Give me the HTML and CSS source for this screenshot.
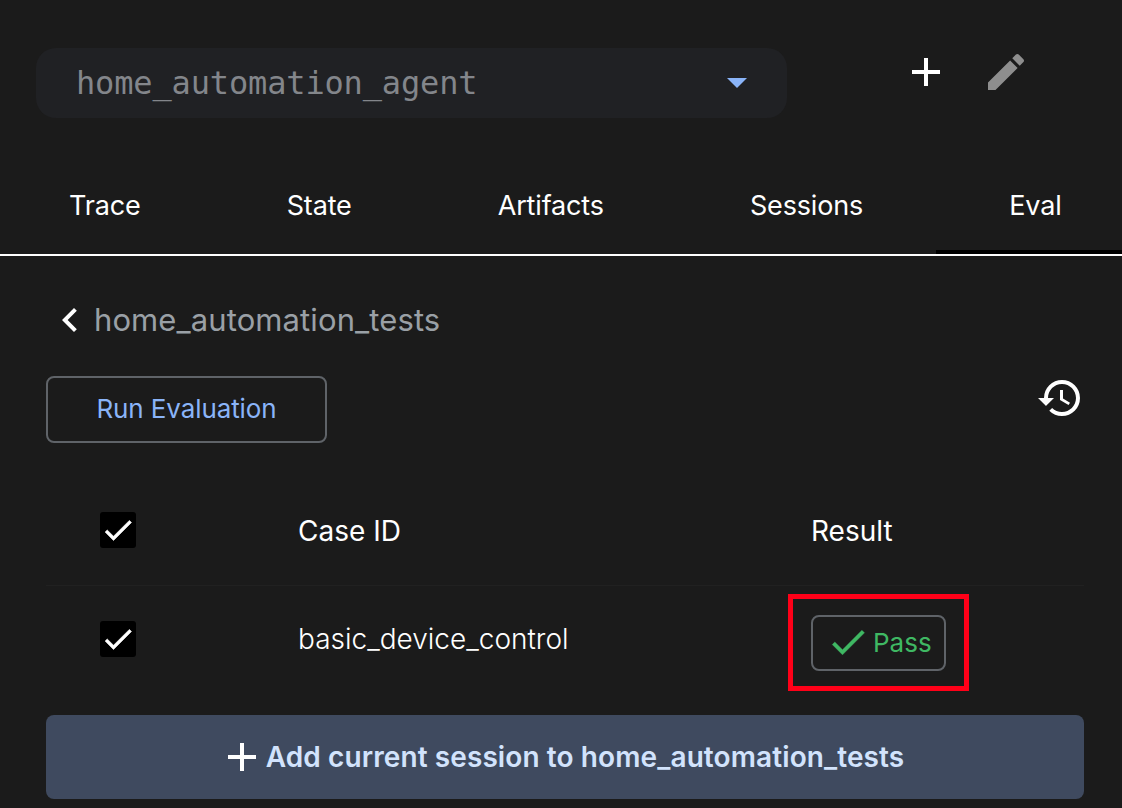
FILE: index.html
```html
<!DOCTYPE html>
<html lang="en">
<head>
<meta charset="UTF-8">
<meta name="viewport" content="width=device-width, initial-scale=1.0">
<title>Eval</title>
<link rel="stylesheet" href="styles.css">
</head>
<body>

<!-- App Selector -->
<div class="top-row">
<div class="app-select">
<span class="app-name">home_automation_agent</span>
<span class="select-arrow"></span>
</div>
<div class="top-actions">
<svg class="icon-48 white" viewBox="0 0 24 24"><path d="M19 13h-6v6h-2v-6H5v-2h6V5h2v6h6v2z"/></svg>
<svg class="icon-48 grey" viewBox="0 0 24 24"><path d="M3 17.25V21h3.75L17.81 9.94l-3.75-3.75L3 17.25zM20.71 7.04c.39-.39.39-1.02 0-1.41l-2.34-2.34c-.39-.39-1.02-.39-1.41 0l-1.83 1.83 3.75 3.75 1.83-1.83z"/></svg>
</div>
</div>

<!-- Tabs -->
<div class="tabs">
<div class="tab">Trace</div>
<div class="tab">State</div>
<div class="tab">Artifacts</div>
<div class="tab">Sessions</div>
<div class="tab active">Eval</div>
</div>

<div class="content">

<div class="back-row">
<svg class="icon-48 white" viewBox="0 0 24 24"><path d="M15.41 7.41L14 6l-6 6 6 6 1.41-1.41L10.83 12z"/></svg>
<span class="set-name">home_automation_tests</span>
</div>

<div class="run-row">
<button class="run-btn">Run Evaluation</button>
<svg class="icon-48 white" viewBox="0 0 24 24"><path d="M13 3a9 9 0 0 0-9 9H1l3.89 3.89.07.14L9 12H6c0-3.87 3.13-7 7-7s7 3.13 7 7-3.13 7-7 7c-1.93 0-3.68-.79-4.94-2.06l-1.42 1.42A8.954 8.954 0 0 0 13 21a9 9 0 0 0 0-18zm-1 5v5l4.28 2.54.72-1.21-3.5-2.08V8H12z"/></svg>
</div>

<!-- Case Table -->
<div class="case-table">
<div class="case-row header-row">
<div class="checkbox"><svg viewBox="0 0 24 24"><path d="M9 16.17L4.83 12l-1.42 1.41L9 19 21 7l-1.41-1.41z"/></svg></div>
<div class="case-id head-text">Case ID</div>
<div class="case-result head-text">Result</div>
</div>
<div class="case-row">
<div class="checkbox"><svg viewBox="0 0 24 24"><path d="M9 16.17L4.83 12l-1.42 1.41L9 19 21 7l-1.41-1.41z"/></svg></div>
<div class="case-id light">basic_device_control</div>
<div>
<div class="pass-badge">
<svg viewBox="0 0 24 24"><path d="M9 16.17L4.83 12l-1.42 1.41L9 19 21 7l-1.41-1.41z"/></svg>
<span>Pass</span>
<div class="highlight"></div>
</div>
</div>
</div>
</div>

<button class="add-btn">
<svg class="icon-48 white" viewBox="0 0 24 24"><path d="M19 13h-6v6h-2v-6H5v-2h6V5h2v6h6v2z"/></svg>
<span>Add current session to home_automation_tests</span>
</button>

</div>

</body>
</html>
```

FILE: styles.css
```css
* {
margin: 0;
padding: 0;
box-sizing: border-box;
font-family: Inter, sans-serif;
}

body {
background-color: #1b1b1b;
color: #fff;
width: 1122px;
height: 808px;
overflow: hidden;
}

.icon-48 {
width: 48px;
height: 48px;
flex-shrink: 0;
display: block;
}

.white {
fill: #fff;
}

.grey {
fill: #8e8e8e;
}

/* App Selector */
.top-row {
display: flex;
align-items: flex-start;
padding: 48px 0 0 36px;
}

.app-select {
width: 751px;
height: 70px;
background: #202124;
border-radius: 20px;
display: flex;
align-items: center;
justify-content: space-between;
padding: 0 40px;
}

.app-name {
font-family: "DejaVu Sans Mono", monospace;
font-size: 32px;
letter-spacing: -0.15px;
color: #83868b;
}

.select-arrow {
width: 0;
height: 0;
border-left: 10px solid transparent;
border-right: 10px solid transparent;
border-top: 10px solid #8ab4f8;
}

.top-actions {
display: flex;
gap: 32px;
margin-left: 115px;
}

/* Tabs */
.tabs {
display: flex;
height: 102px;
margin-top: 36px;
border-bottom: 2px solid #fff;
overflow: hidden;
}

.tab {
flex-shrink: 0;
padding: 2px 73px 0;
height: 100px;
display: flex;
align-items: center;
font-size: 27px;
letter-spacing: -0.15px;
color: #fff;
}

.tab:first-child {
margin-left: -4px;
}

.tab.active {
box-shadow: inset 0 -4px 0 #000;
}

/* Content */
.content {
padding: 40px 38px 0 46px;
}

.back-row {
display: flex;
align-items: center;
}

.set-name {
font-size: 31px;
letter-spacing: 0.1px;
padding-bottom: 2px;
color: #9aa0a6;
}

.run-row {
display: flex;
justify-content: space-between;
align-items: flex-start;
margin-top: 32px;
}

.run-btn {
width: 281px;
height: 67px;
padding-bottom: 2px;
background: transparent;
border: 2px solid #5f6368;
border-radius: 8px;
color: #8ab4f8;
font-size: 26px;
letter-spacing: -0.1px;
}

.run-row .icon-48 {
margin-top: -2px;
}

/* Case Table */
.case-table {
margin-top: 34px;
}

.case-row {
display: grid;
grid-template-columns: 198px 513px 1fr;
align-items: center;
height: 108px;
padding-left: 54px;
}

.header-row {
padding-bottom: 2px;
box-shadow: 0 1px 0 #212121;
}

.head-text {
padding-top: 2px;
}

.checkbox {
width: 36px;
height: 36px;
background: #000;
border-radius: 3px;
}

.checkbox svg {
display: block;
fill: #fff;
stroke: #fff;
stroke-width: .4;
}

.case-id {
font-size: 28px;
}

.light {
font-weight: 300;
}

.case-result {
font-size: 28px;
}

.pass-badge {
position: relative;
display: flex;
align-items: center;
width: 135px;
height: 56px;
margin-top: 8px;
border: 2px solid #5f6368;
border-radius: 8px;
padding: 0 0 2px 13px;
color: #3fb863;
font-size: 26px;
}

.pass-badge svg {
width: 44px;
height: 44px;
margin-right: 3px;
fill: #3fb863;
stroke: #3fb863;
stroke-width: .2;
flex-shrink: 0;
}

/* Red annotation round the result */
.highlight {
position: absolute;
top: -23px;
bottom: -22px;
left: -25px;
right: -25px;
border: 5px solid #ff0018;
}

.add-btn {
width: 1038px;
height: 84px;
margin-top: 22px;
padding-right: 8px;
background: #3f4a5f;
border: none;
border-radius: 8px;
color: #d2e3fc;
font-size: 28px;
font-weight: 600;
letter-spacing: 0.1px;
display: flex;
align-items: center;
justify-content: center;
}
```
